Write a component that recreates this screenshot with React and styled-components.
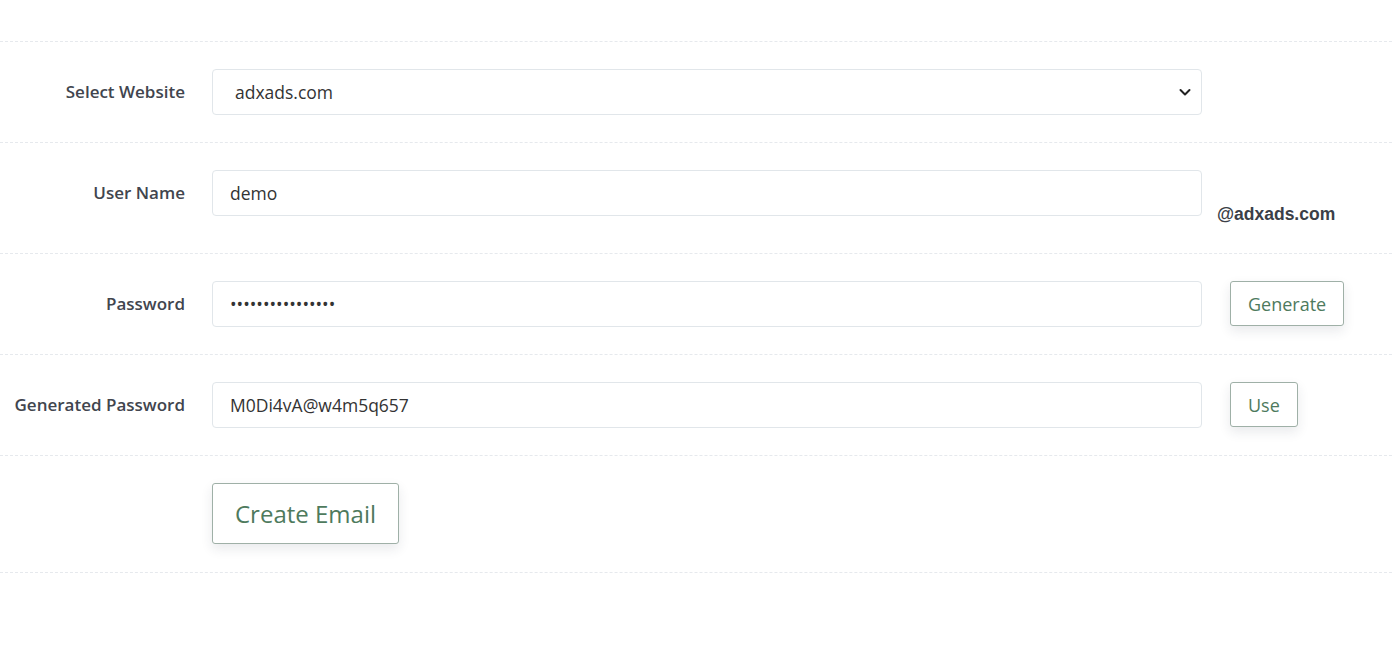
import React from 'react';
import styled, { createGlobalStyle } from 'styled-components';

const GlobalStyle = createGlobalStyle`
  body {
    margin: 0;
    background: #fff;
    font-family: "Open Sans", "Noto Sans", sans-serif;
  }
`;

function App() {
    return (
        <>
            <GlobalStyle />
            <Page>
                <Form>
                    <Row>
                        <Label>Select Website</Label>
                        <Field>
                            <SelectWrap>
                                <Select defaultValue="adxads.com">
                                    <option>adxads.com</option>
                                </Select>
                                <Chevron viewBox="0 0 16 16">
                                    <path d="M3.5 6l4.5 4.5L12.5 6" fill="none" stroke="#222" strokeWidth="2" strokeLinecap="round" strokeLinejoin="round" />
                                </Chevron>
                            </SelectWrap>
                        </Field>
                        <Side />
                    </Row>
                    <Row>
                        <Label>User Name</Label>
                        <Field>
                            <Input defaultValue="demo" />
                        </Field>
                        <Side>
                            <Domain>@adxads.com</Domain>
                        </Side>
                    </Row>
                    <Row>
                        <Label>Password</Label>
                        <Field>
                            <Input type="password" defaultValue="abcdefghijklmnop" />
                        </Field>
                        <Side>
                            <Button>Generate</Button>
                        </Side>
                    </Row>
                    <Row>
                        <Label>Generated Password</Label>
                        <Field>
                            <Input defaultValue="M0Di4vA@w4m5q657" />
                        </Field>
                        <Side>
                            <Button>Use</Button>
                        </Side>
                    </Row>
                    <Row $last>
                        <Label />
                        <Field>
                            <Button $big>Create Email</Button>
                        </Field>
                        <Side />
                    </Row>
                </Form>
            </Page>
        </>
    );
}

export default App;

const Page = styled.div`
    padding-top: 41px;
    min-height: 654px;
    box-sizing: border-box;
`;

const Form = styled.div`
    border-top: 1px dashed #e6e9ed;
`;

const Row = styled.div`
    display: flex;
    align-items: flex-start;
    padding: 27px 0 ${p => (p.$last ? 28 : 27)}px;
    border-bottom: 1px dashed #e6e9ed;
`;

const Label = styled.div`
    width: 185px;
    flex-shrink: 0;
    text-align: right;
    line-height: 46px;
    font-size: 17px;
    font-weight: 600;
    color: #41454e;
`;

const Field = styled.div`
    width: 990px;
    margin-left: 27px;
    flex-shrink: 0;
`;

const Side = styled.div`
    flex: 1;
    padding-left: 15px;
    min-height: 46px;
`;

const inputBase = `
    width: 100%;
    height: 46px;
    box-sizing: border-box;
    border: 1px solid #e1e6ea;
    border-radius: 4px;
    background: #fff;
    font-family: "Open Sans", "Noto Sans", sans-serif;
    font-size: 17.5px;
    color: #333;
    outline: none;
`;

const Input = styled.input`
    ${inputBase}
    padding: 0 17px;
`;

const SelectWrap = styled.div`
    position: relative;
`;

const Select = styled.select`
    ${inputBase}
    padding: 0 22px;
    appearance: none;
    -webkit-appearance: none;
`;

const Chevron = styled.svg`
    position: absolute;
    right: 9px;
    top: 15px;
    width: 16px;
    height: 16px;
    pointer-events: none;
`;

const Domain = styled.div`
    margin-top: 33px;
    padding-bottom: 1px;
    font-family: "Liberation Sans", Arial, sans-serif;
    font-weight: 700;
    font-size: 17.5px;
    line-height: 22px;
    color: #3b3f48;
`;

const Button = styled.button`
    margin-left: ${p => (p.$big ? 0 : 13)}px;
    height: ${p => (p.$big ? 61 : 45)}px;
    padding: 0 ${p => (p.$big ? 22 : 17)}px;
    background: #fff;
    border: 1px solid #9fb0a7;
    border-radius: 3px;
    box-shadow: 0 5px 12px rgba(40, 50, 70, 0.1);
    font-family: "Open Sans", "Noto Sans", sans-serif;
    font-size: ${p => (p.$big ? 24 : 18)}px;
    color: #4e7a5d;
    cursor: pointer;
`;
